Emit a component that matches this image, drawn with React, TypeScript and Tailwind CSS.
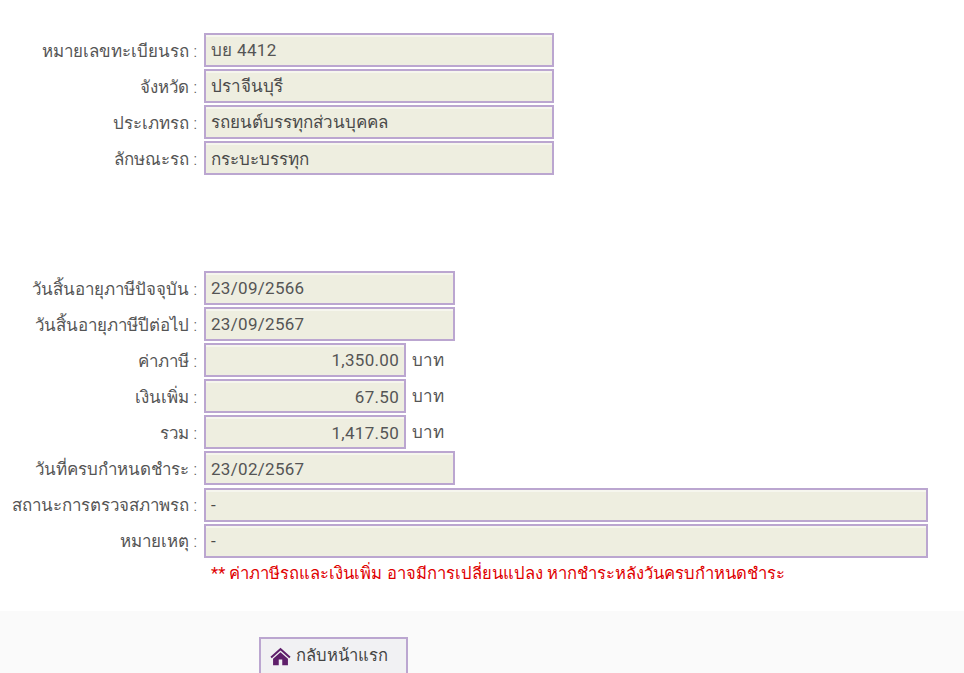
type Field = {
  label: string;
  value: string;
  width: string;
  right?: boolean;
  unit?: boolean;
  num?: boolean;
};

const carFields: Field[] = [
  { label: 'หมายเลขทะเบียนรถ', value: 'บย 4412', width: 'w-[350px]', num: true },
  { label: 'จังหวัด', value: 'ปราจีนบุรี', width: 'w-[350px]' },
  { label: 'ประเภทรถ', value: 'รถยนต์บรรทุกส่วนบุคคล', width: 'w-[350px]' },
  { label: 'ลักษณะรถ', value: 'กระบะบรรทุก', width: 'w-[350px]' },
];

const taxFields: Field[] = [
  { label: 'วันสิ้นอายุภาษีปัจจุบัน', value: '23/09/2566', width: 'w-[251px]', num: true },
  { label: 'วันสิ้นอายุภาษีปีต่อไป', value: '23/09/2567', width: 'w-[251px]', num: true },
  { label: 'ค่าภาษี', value: '1,350.00', width: 'w-[202px]', right: true, unit: true, num: true },
  { label: 'เงินเพิ่ม', value: '67.50', width: 'w-[202px]', right: true, unit: true, num: true },
  { label: 'รวม', value: '1,417.50', width: 'w-[202px]', right: true, unit: true, num: true },
  { label: 'วันที่ครบกำหนดชำระ', value: '23/02/2567', width: 'w-[251px]', num: true },
  { label: 'สถานะการตรวจสภาพรถ', value: '-', width: 'w-[724px]' },
  { label: 'หมายเหตุ', value: '-', width: 'w-[724px]' },
];

function Row({ field }: { field: Field }) {
  return (
    <div className="flex h-[36.1px] items-center">
      <label className="w-[198px] shrink-0 pt-[3px] pr-[1px] text-right text-[16.9px] font-light text-[#555555]">
        {field.label} :
      </label>
      <div
        className={`ml-[6px] flex h-[34px] items-center border-2 border-[#bba6d0] bg-[#eeeee0] px-[5px] pt-[2px] shadow-[inset_0_2px_0_#f6f6ee] ${field.width} ${field.right ? 'justify-end' : ''} ${field.num ? 'tracking-[0.3px] text-[#555555]' : 'text-[#4a4a4a]'}`}
      >
        {field.value}
      </div>
      {field.unit && <span className="ml-[6px] pt-[1px] font-light text-[#555555]">บาท</span>}
    </div>
  );
}

export default function App() {
  return (
    <div className="h-[673px] overflow-hidden bg-white font-['Roboto','Noto_Sans',sans-serif] text-[17px]">
      <div className="flex flex-col pt-[32px]">
        {carFields.map((field) => (
          <Row key={field.label} field={field} />
        ))}
      </div>
      <div className="mt-[93.6px] flex flex-col">
        {taxFields.map((field) => (
          <Row key={field.label} field={field} />
        ))}
      </div>
      <p className="mt-[3.2px] pl-[211px] text-[16.6px] text-[#e00000]">
        ** ค่าภาษีรถและเงินเพิ่ม อาจมีการเปลี่ยนแปลง หากชำระหลังวันครบกำหนดชำระ
      </p>
      <div className="mt-[24px] h-[70px] bg-[#fafafa] pl-[259px] pt-[26px]">
        <div className="flex h-[40px] w-[149px] items-center gap-[5px] border-2 border-b-0 border-[#bba6d0] bg-[#f1f1f3] pb-[3px] pl-[9px] text-[16.6px] font-light text-[#444444]">
          <svg viewBox="0 0 24 24" className="h-[21px] w-[21px] fill-[#5f1f6b]">
            <path d="M12 2 0.5 12.4l1.5 1.7L12 5.1l10 9 1.5-1.7L12 2Z" />
            <path fillRule="evenodd" d="M12 7 3.5 14.6V22h17v-7.4L12 7Zm-2 8.5h4V22h-4v-6.5Z" />
          </svg>
          กลับหน้าแรก
        </div>
      </div>
    </div>
  );
}
